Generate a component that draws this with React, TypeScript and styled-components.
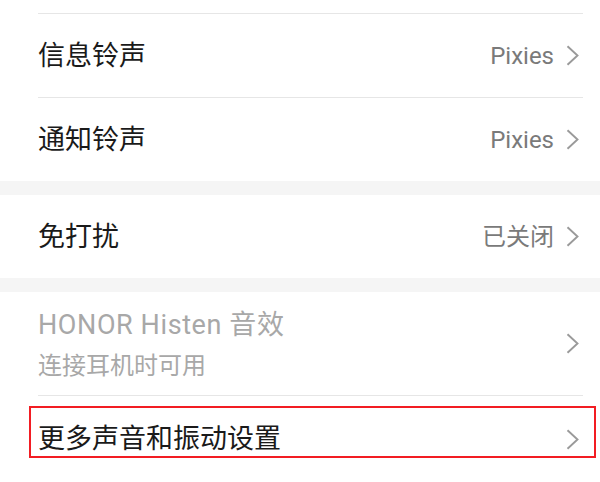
import React from "react";
import styled, { createGlobalStyle } from "styled-components";

const GlobalStyle = createGlobalStyle`
  html, body { margin: 0; padding: 0; background: #ffffff; }
  body { font-family: Roboto, "Noto Sans CJK SC", sans-serif; -webkit-font-smoothing: antialiased; }
`;

const Page = styled.div`
  width: 600px;
  height: 482px;
  overflow: hidden;
  background: #f5f5f5;
  display: flex;
  flex-direction: column;
`;

const Group = styled.div`
  background: #ffffff;
  display: flex;
  flex-direction: column;
`;

const GroupGap = styled.div`
  height: 14px;
  background: #f5f5f5;
  flex-shrink: 0;
`;

const Remnant = styled.div`
  height: 13px;
  margin: 0 17px 0 38px;
  border-bottom: 1px solid #e6e6e6;
`;

const Row = styled.div<{ $h?: number; $divider?: boolean }>`
  position: relative;
  height: ${(p) => p.$h ?? 83}px;
  margin: 0 17px 0 38px;
  padding-right: 4px;
  display: flex;
  align-items: center;
  justify-content: space-between;
  border-bottom: ${(p) => (p.$divider ? "1px solid #e6e6e6" : "none")};
  flex-shrink: 0;
`;

const Texts = styled.div`
  display: flex;
  flex-direction: column;
`;

const Title = styled.div<{ $disabled?: boolean }>`
  font-size: 27px;
  line-height: 34px;
  color: ${(p) => (p.$disabled ? "#a8a8a8" : "#1a1a1a")};
  letter-spacing: ${(p) => (p.$disabled ? "0.6px" : "0")};
  font-family: Roboto, "Noto Sans CJK SC", sans-serif;
  white-space: nowrap;
`;

const Sub = styled.div`
  margin-top: 10px;
  font-size: 24px;
  line-height: 28px;
  color: #a8a8a8;
  white-space: nowrap;
`;

const Right = styled.div`
  display: flex;
  align-items: center;
  gap: 12px;
`;

const Value = styled.span`
  font-size: 24px;
  line-height: 30px;
  color: #7a7a7a;
  white-space: nowrap;
`;

const Highlight = styled.div`
  position: absolute;
  left: -9px;
  right: -13px;
  top: 10px;
  height: 52px;
  border: 2px solid #f21d23;
  box-sizing: border-box;
  pointer-events: none;
`;

const Chevron = () => (
  <svg width="13" height="21" viewBox="0 0 13 21" style={{ display: "block" }}>
    <path d="M1.5 1.2 L11.5 10.5 L1.5 19.8" fill="none" stroke="#9a9a9a" strokeWidth="1.9" strokeLinejoin="miter" />
  </svg>
);

export default function App() {
  return (
    <>
      <GlobalStyle />
      <Page>
        <Group>
          <Remnant />
          <Row $divider>
            <Title>信息铃声</Title>
            <Right>
              <Value>Pixies</Value>
              <Chevron />
            </Right>
          </Row>
          <Row>
            <Title>通知铃声</Title>
            <Right>
              <Value>Pixies</Value>
              <Chevron />
            </Right>
          </Row>
        </Group>
        <GroupGap />
        <Group>
          <Row>
            <Title>免打扰</Title>
            <Right>
              <Value>已关闭</Value>
              <Chevron />
            </Right>
          </Row>
        </Group>
        <GroupGap />
        <Group>
          <Row $h={103} $divider>
            <Texts>
              <Title $disabled>HONOR Histen 音效</Title>
              <Sub>连接耳机时可用</Sub>
            </Texts>
            <Right>
              <Chevron />
            </Right>
          </Row>
          <Row $h={86}>
            <Title>更多声音和振动设置</Title>
            <Right>
              <Chevron />
            </Right>
            <Highlight />
          </Row>
        </Group>
      </Page>
    </>
  );
}
